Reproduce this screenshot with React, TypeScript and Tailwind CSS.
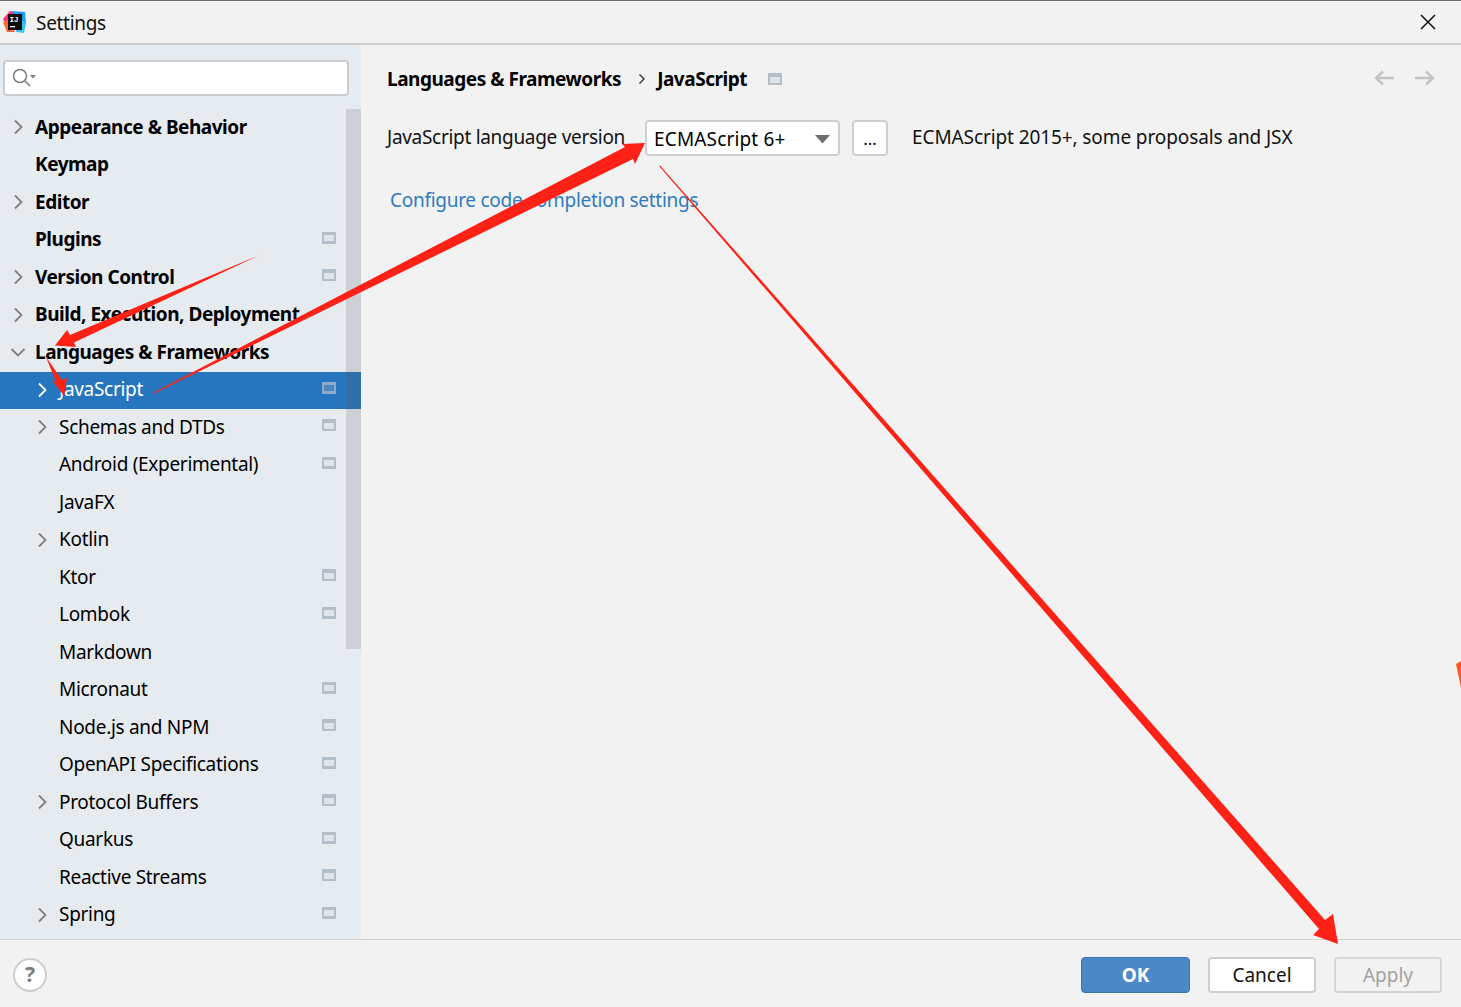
const NAV = [
  { label: 'Appearance & Behavior', bold: true, arrow: 'right' },
  { label: 'Keymap', bold: true },
  { label: 'Editor', bold: true, arrow: 'right' },
  { label: 'Plugins', bold: true, badge: true },
  { label: 'Version Control', bold: true, arrow: 'right', badge: true },
  { label: 'Build, Execution, Deployment', bold: true, arrow: 'right' },
  { label: 'Languages & Frameworks', bold: true, arrow: 'down' },
  { label: 'JavaScript', arrow: 'right', badge: true, selected: true },
  { label: 'Schemas and DTDs', arrow: 'right', badge: true },
  { label: 'Android (Experimental)', badge: true },
  { label: 'JavaFX' },
  { label: 'Kotlin', arrow: 'right' },
  { label: 'Ktor', badge: true },
  { label: 'Lombok', badge: true },
  { label: 'Markdown' },
  { label: 'Micronaut', badge: true },
  { label: 'Node.js and NPM', badge: true },
  { label: 'OpenAPI Specifications', badge: true },
  { label: 'Protocol Buffers', arrow: 'right', badge: true },
  { label: 'Quarkus', badge: true },
  { label: 'Reactive Streams', badge: true },
  { label: 'Spring', arrow: 'right', badge: true },
];

function ProjectBadge({ selected }: { selected?: boolean }) {
  return (
    <span className={`flex h-[12px] w-[14px] items-center justify-center pt-[1px] ${selected ? 'bg-[#8fa9c6]' : 'bg-[#b4bec8]'}`}>
      <span className={`h-[6px] w-[10px] ${selected ? 'bg-[#4a86c0]' : 'bg-[#dfe4e9]'}`} />
    </span>
  );
}

function Chevron({ dir, color }: { dir: string; color: string }) {
  return (
    <svg width="16" height="16" viewBox="0 0 16 16" fill="none" stroke={color} strokeWidth="1.8">
      {dir === 'down' ? <path d="M1.5 5 L8 11.5 L14.5 5" /> : <path d="M5 1.5 L11.5 8 L5 14.5" />}
    </svg>
  );
}

function NavRow({ item }: { item: (typeof NAV)[number] }) {
  const child = !item.bold;
  return (
    <div className={`relative flex h-[37.5px] items-center pb-[2px] ${item.selected ? 'bg-[#2675bf] text-white' : 'text-black'}`}>
      {item.arrow ? (
        <span className={`absolute top-[10px] ${child ? 'left-[34px]' : 'left-[10px]'}`}>
          <Chevron dir={item.arrow} color={item.selected ? '#ffffff' : '#7f7f7f'} />
        </span>
      ) : null}
      <span className={`whitespace-nowrap text-[19px] ${child ? 'ml-[59px] tracking-[-0.3px]' : 'ml-[35px] font-bold tracking-[-0.47px]'}`}>
        {item.label}
      </span>
      {item.badge ? (
        <span className="absolute left-[322px] top-[10px]">
          <ProjectBadge selected={item.selected} />
        </span>
      ) : null}
    </div>
  );
}

function Logo() {
  return (
    <svg width="24" height="24" viewBox="0 0 24 24" className="ml-[2px]">
      <path d="M1 9 L8 1 L14 3 L9 14 L4 15 Z" fill="#ff2f7e" />
      <path d="M1 12 L5 22 L13 22 L7 10 Z" fill="#ff6a2b" />
      <path d="M9 1 L23 2 L24 14 L14 6 Z" fill="#1c9ff0" />
      <path d="M16 8 L24 13 L22 23 L14 22 Z" fill="#35c2f2" />
      <rect x="6" y="4" width="14" height="16" fill="#0b0b0b" />
      <text x="7.5" y="11.5" fontSize="7.5" fontWeight="700" fill="#fff" fontFamily="'Liberation Mono', monospace">IJ</text>
      <rect x="8" y="16" width="5" height="1.3" fill="#fff" />
    </svg>
  );
}

function Annotations() {
  return (
    <svg className="pointer-events-none absolute left-0 top-0" width="1461" height="1007" viewBox="0 0 1461 1007">
      <g fill="#ff2116">
        <path d="M259.5 255 L70 335 L67 330 L55 345.5 L76 347 L74 342.5 Z" />
        <path d="M46 357 L56 382 L52 380 L64 396 L67 378 L62 380 Z" />
        <path d="M153 394 L153.5 392.5 L625 147 L622 144 L645 143 L635 164 L633 159 Z" />
        <path d="M659 166 L660 165.5 L1325 920 L1333 914 L1338 944 L1313 935 L1319 929 Z" />
        <path d="M1456 664 L1461 661 L1461 688 Z" fill="#ff5a1f" />
      </g>
    </svg>
  );
}

export default function App() {
  return (
    <div className="relative flex h-[1007px] w-[1461px] flex-col overflow-hidden bg-[#f2f2f2] font-['Noto_Sans',sans-serif] text-black">
      <header className="flex h-[45px] shrink-0 items-center border-b-2 border-t border-b-[#cdcdcd] border-t-[#6e6e6e] bg-[#f2f2f2]">
        <Logo />
        <span className="ml-[10px] pt-[2px] text-[19px] tracking-[-0.3px] text-[#111]">Settings</span>
        <svg className="ml-auto mr-[25px]" width="16" height="16" viewBox="0 0 16 16" fill="none" stroke="#111" strokeWidth="1.5">
          <path d="M1 1 L15 15 M15 1 L1 15" />
        </svg>
      </header>

      <div className="flex min-h-0 flex-1">
        <aside className="flex w-[361px] shrink-0 flex-col bg-[#e6ebf0]">
          <div className="flex h-[64px] shrink-0 items-start px-[3px] pt-[15px]">
            <div className="flex h-[36px] w-[346px] items-center rounded-[4px] border-2 border-[#c9cdd1] bg-white pl-[7px]">
              <svg width="24" height="20" viewBox="0 0 24 20" fill="none" stroke="#7d7d7d" strokeWidth="1.5">
                <circle cx="8" cy="8" r="6.5" />
                <path d="M13 13 L18 18" />
                <path d="M18 7 L24 7 L21 10.5 Z" fill="#7d7d7d" stroke="none" />
              </svg>
            </div>
          </div>
          <div className="relative min-h-0 flex-1 overflow-hidden">
            <span className="absolute right-0 top-0 h-[540px] w-[15px] bg-[#cdd1d5]" />
            <div className="relative">
              {NAV.map((item) => (
                <NavRow key={item.label} item={item} />
              ))}
            </div>
            <span className="absolute right-0 top-[263px] h-[37px] w-[15px] bg-[#2f6fa9]" />
          </div>
        </aside>

        <main className="min-w-0 flex-1 pl-[26px] pr-[26px] pt-[21px]">
          <div className="flex h-[26px] items-center font-bold">
            <span className="text-[19px] tracking-[-0.47px]">Languages &amp; Frameworks</span>
            <svg className="ml-[17px]" width="8" height="12" viewBox="0 0 8 12" fill="none" stroke="#333" strokeWidth="1.4">
              <path d="M1.5 1.5 L6 6 L1.5 10.5" />
            </svg>
            <span className="ml-[11px] text-[19px] tracking-[-0.47px]">JavaScript</span>
            <span className="ml-[21px]">
              <ProjectBadge />
            </span>
            <div className="ml-auto flex -translate-y-px items-center gap-[19px]">
              <svg width="21" height="16" viewBox="0 0 21 16" fill="none" stroke="#c4c4c4" strokeWidth="2.4">
                <path d="M20 8 L2 8 M9 1.5 L2 8 L9 14.5" />
              </svg>
              <svg width="21" height="16" viewBox="0 0 21 16" fill="none" stroke="#c4c4c4" strokeWidth="2.4">
                <path d="M1 8 L19 8 M12 1.5 L19 8 L12 14.5" />
              </svg>
            </div>
          </div>

          <div className="mt-[28px] flex h-[36px] items-center">
            <span className="pb-[2px] text-[19px] tracking-[-0.3px] text-[#111]">JavaScript language version</span>
            <div className="ml-[20px] flex h-[36px] w-[195px] items-center rounded-[4px] border-2 border-[#cfcfcf] bg-white pl-[7px] pr-[8px] pt-[2px] text-[19px] tracking-[0.15px]">
              ECMAScript 6+
              <svg className="ml-auto" width="15" height="9" viewBox="0 0 15 9">
                <path d="M0 0 L15 0 L7.5 8.5 Z" fill="#6e6e6e" />
              </svg>
            </div>
            <div className="ml-[12px] flex h-[36px] w-[36px] items-center justify-center rounded-[4px] border-2 border-[#cfcfcf] bg-white text-[17px] leading-none">
              ...
            </div>
            <span className="ml-[24px] whitespace-nowrap pb-[2px] text-[19px] tracking-[-0.1px] text-[#111]">
              ECMAScript 2015+, some proposals and JSX
            </span>
          </div>

          <div className="ml-[3px] mt-[30px] text-[19px] tracking-[-0.28px] text-[#2f7bbf]">Configure code completion settings</div>
        </main>
      </div>

      <footer className="flex h-[68px] shrink-0 items-center border-t border-[#d2d2d2] bg-[#f2f2f2] pl-[13px] pr-[19px] pt-[2px]">
        <div className="flex h-[34px] w-[34px] items-center justify-center rounded-full border-2 border-[#cfcfcf] bg-white text-[21px] font-bold leading-none text-[#7d7d7d]">
          ?
        </div>
        <div className="ml-auto flex items-center gap-[18px] text-[19px]">
          <div className="flex h-[36px] w-[109px] items-center justify-center rounded-[4px] border border-[#3a75b3] bg-[#4c88c8] pt-[2px] font-bold text-white">OK</div>
          <div className="flex h-[36px] w-[108px] items-center justify-center rounded-[4px] border-2 border-[#cfcfcf] bg-white pt-[2px] text-[#111]">Cancel</div>
          <div className="flex h-[36px] w-[108px] items-center justify-center rounded-[4px] border-2 border-[#d6d6d6] bg-[#f2f2f2] pt-[2px] text-[#a3a3a3]">Apply</div>
        </div>
      </footer>

      <Annotations />
    </div>
  );
}
